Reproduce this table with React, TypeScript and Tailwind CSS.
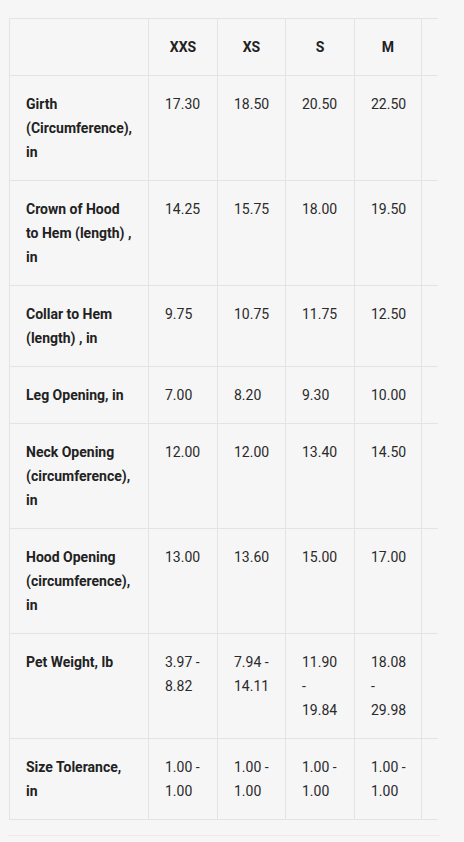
const sizes = ['XXS', 'XS', 'S', 'M'];

const rows: { label: string; values: string[] }[] = [
  { label: 'Girth (Circumference), in', values: ['17.30', '18.50', '20.50', '22.50'] },
  { label: 'Crown of Hood to Hem (length) , in', values: ['14.25', '15.75', '18.00', '19.50'] },
  { label: 'Collar to Hem (length) , in', values: ['9.75', '10.75', '11.75', '12.50'] },
  { label: 'Leg Opening, in', values: ['7.00', '8.20', '9.30', '10.00'] },
  { label: 'Neck Opening (circumference), in', values: ['12.00', '12.00', '13.40', '14.50'] },
  { label: 'Hood Opening (circumference), in', values: ['13.00', '13.60', '15.00', '17.00'] },
  { label: 'Pet Weight, lb', values: ['3.97 - 8.82', '7.94 - 14.11', '11.90 - 19.84', '18.08 - 29.98'] },
  { label: 'Size Tolerance, in', values: ['1.00 - 1.00', '1.00 - 1.00', '1.00 - 1.00', '1.00 - 1.00'] },
];

const cell = 'border border-[#e3e3e3] py-4 align-top';

export default function App() {
  return (
    <main
      className="min-h-[842px] w-[464px] bg-[#f6f6f6] pt-[18px] text-[14px] leading-6 text-[#222]"
      style={{ fontFamily: 'Roboto, "Liberation Sans", sans-serif' }}
    >
      <div className="ml-[9px] w-[429px] overflow-hidden">
        <table className="w-[480px] table-fixed border-collapse">
          <colgroup>
            <col className="w-[139px]" />
            <col className="w-[69px]" />
            <col className="w-[68px]" />
            <col className="w-[69px]" />
            <col className="w-[67px]" />
            <col className="w-[68px]" />
          </colgroup>
          <thead>
            <tr>
              <th className={`${cell} px-4`}></th>
              {sizes.map(s => (
                <th key={s} className={`${cell} px-4 text-center font-bold`}>{s}</th>
              ))}
              <th className={cell}></th>
            </tr>
          </thead>
          <tbody>
            {rows.map(r => (
              <tr key={r.label}>
                <td className={`${cell} px-4 font-bold`}>{r.label}</td>
                {r.values.map((v, i) => (
                  <td key={i} className={`${cell} pl-4 pr-3 text-[#2a2a2a]`}>{v}</td>
                ))}
                <td className={cell}></td>
              </tr>
            ))}
          </tbody>
        </table>
      </div>
      <div className="ml-[8px] mt-[15px] w-[432px] border-t border-[#ececec]"></div>
    </main>
  );
}
